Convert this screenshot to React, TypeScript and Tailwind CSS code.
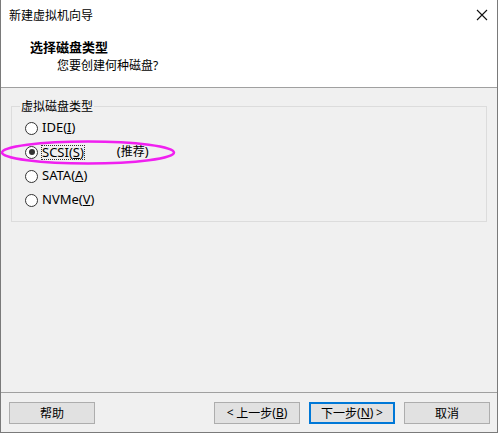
import React from "react";

const font = { fontFamily: '"Noto Sans CJK SC", "Noto Sans", sans-serif' };
const latin = { fontFamily: '"Noto Sans", "Noto Sans CJK SC", sans-serif' };

function Radio({ checked }: { checked?: boolean }) {
  return (
    <span className="w-[13px] h-[13px] rounded-full border border-[#333333] bg-white flex items-center justify-center shrink-0">
      {checked && <span className="w-[6px] h-[6px] rounded-full bg-[#333333]" />}
    </span>
  );
}

function Btn({ children, primary }: { children: React.ReactNode; primary?: boolean }) {
  return (
    <div
      className={
        "w-[86px] h-[22px] flex items-center justify-center text-[12px] text-black bg-[#e1e1e1] " +
        (primary ? "border-2 border-[#0078d7]" : "border border-[#adadad]")
      }
    >
      {children}
    </div>
  );
}

export default function App() {
  return (
    <div className="relative w-[499px] h-[433px] bg-white overflow-hidden" style={font}>
      <div className="w-[498px] h-[433px] flex flex-col border-l border-r border-b border-[#7a7a7a]">
        {/* title bar */}
        <div className="h-[30px] bg-white flex items-center justify-between pl-[8px] pr-[8px] shrink-0">
          <span className="text-[12px] text-black leading-none">新建虚拟机向导</span>
          <svg width="12" height="12" viewBox="0 0 12 12" className="mr-[1px]">
            <path d="M1 1 L11 11 M11 1 L1 11" stroke="#111" strokeWidth="1.1" />
          </svg>
        </div>
        {/* header */}
        <div className="h-[58px] bg-white border-b border-[#a0a0a0] shrink-0 flex flex-col">
          <div className="text-[13px] font-bold text-black leading-none mt-[10px] ml-[29px]">选择磁盘类型</div>
          <div className="text-[12px] text-black leading-none mt-[6px] ml-[56px]">
            您要创建何种磁盘<span style={latin}>?</span>
          </div>
        </div>
        {/* body */}
        <div className="flex-1 bg-[#f0f0f0] px-[10px] pt-[12px]">
          <fieldset className="border border-[#dcdcdc] h-[122px] pl-[13px] pr-[8px]">
            <legend className="text-[12px] text-black px-[1px] -ml-[5px] leading-none">虚拟磁盘类型</legend>
            <div className="flex flex-col mt-[4px] text-[13px] text-black" style={latin}>
              <div className="h-[24px] flex items-center gap-[4px]">
                <Radio />
                <span>IDE(<u>I</u>)</span>
              </div>
              <div className="h-[24px] flex items-center gap-[4px]">
                <Radio checked />
                <span className="outline-1 outline-dotted outline-[#333] leading-[13px]">SCSI(<u>S</u>)</span>
                <span className="ml-[29px]">(<span className="text-[12px]" style={font}>推荐</span>)</span>
              </div>
              <div className="h-[24px] flex items-center gap-[4px]">
                <Radio />
                <span>SATA(<u>A</u>)</span>
              </div>
              <div className="h-[24px] flex items-center gap-[4px]">
                <Radio />
                <span>NVMe(<u>V</u>)</span>
              </div>
            </div>
          </fieldset>
        </div>
        {/* footer */}
        <div className="h-[40px] bg-[#f0f0f0] border-t border-[#a0a0a0] shrink-0 flex items-start pt-[9px] pl-[8px] pr-[7px]">
          <Btn>帮助</Btn>
          <div className="flex-1" />
          <div className="flex gap-[9px]">
            <Btn>
              <span style={latin}>&lt;</span>&nbsp;上一步<span style={latin}>(<u>B</u>)</span>
            </Btn>
            <Btn primary>
              下一步<span style={latin}>(<u>N</u>)</span>&nbsp;<span style={latin}>&gt;</span>
            </Btn>
            <Btn>取消</Btn>
          </div>
        </div>
      </div>
      <svg className="absolute left-0 top-[139px]" width="178" height="27" viewBox="0 0 178 27">
        <ellipse cx="88" cy="13.5" rx="86" ry="11" fill="none" stroke="#f020f0" strokeWidth="2.5" />
      </svg>
    </div>
  );
}
